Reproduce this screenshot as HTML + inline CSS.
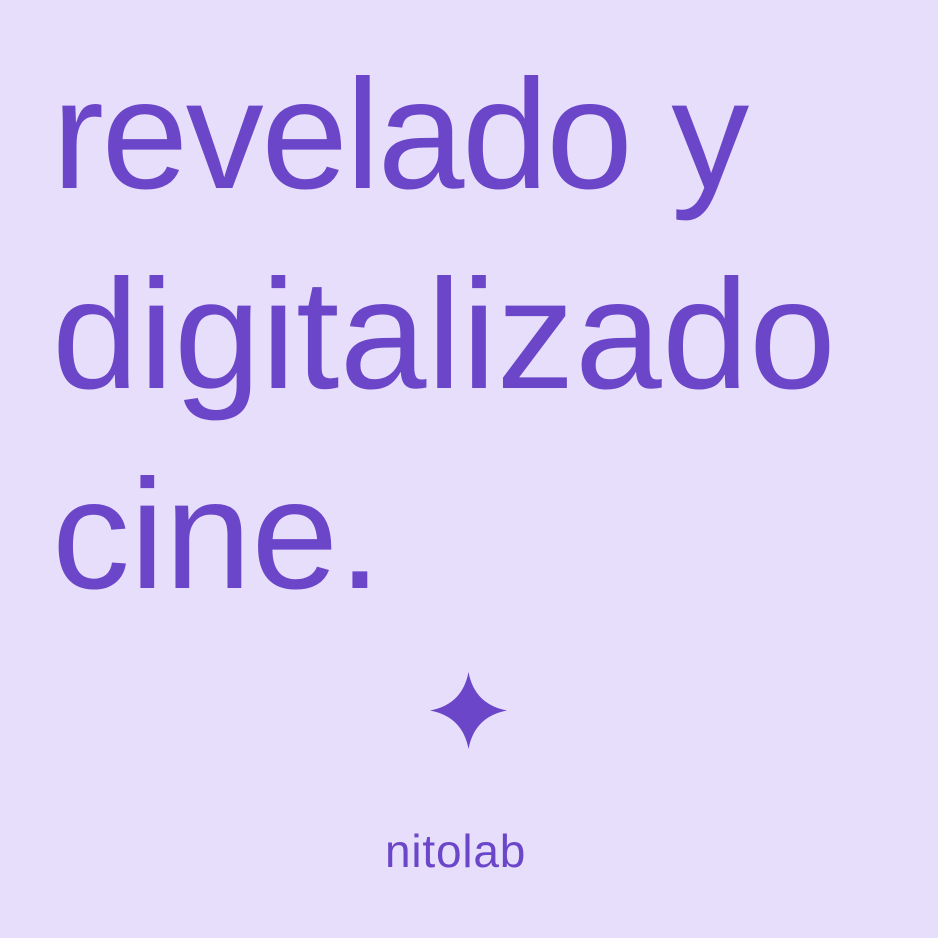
<!DOCTYPE html>
<html><head><style>
html,body{margin:0;padding:0}
body{width:938px;height:938px;background:#e7defb;position:relative;overflow:hidden;font-family:"Liberation Sans",sans-serif;color:#6b46c9}
.l{position:absolute;left:52px;font-size:156px;line-height:1;white-space:nowrap}
.n{position:absolute;left:385px;top:828px;font-size:46px;line-height:1;letter-spacing:0.8px}
</style></head><body>
<div class="l" style="top:57px;letter-spacing:-2.5px">revelado y</div>
<div class="l" style="top:257px;letter-spacing:0.3px">digitalizado</div>
<div class="l" style="top:457px">cine.</div>
<svg style="position:absolute;left:430px;top:672px" width="77" height="77" viewBox="0 0 76 76">
<path d="M38 0 Q44 32 76 38 Q44 44 38 76 Q32 44 0 38 Q32 32 38 0Z" fill="#6b46c9"/>
</svg>
<div class="n">nitolab</div>
</body></html>
